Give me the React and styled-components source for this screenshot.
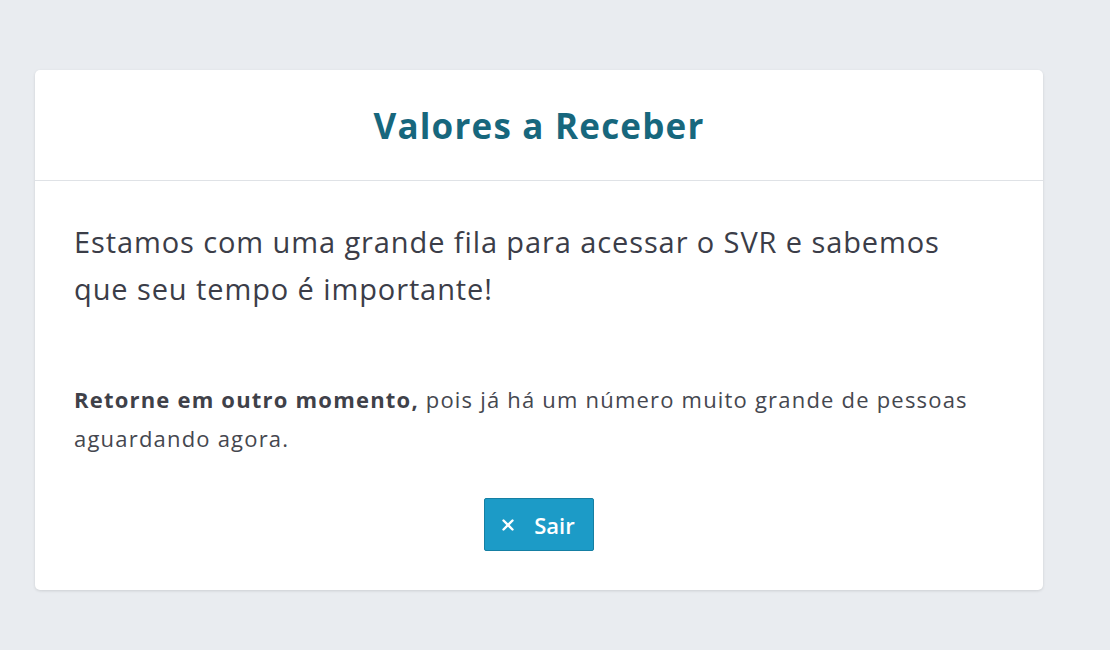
import styled, { createGlobalStyle } from 'styled-components';
import { X } from 'lucide-react';

const GlobalStyle = createGlobalStyle`
  html, body {
    margin: 0;
    padding: 0;
    background: #e9ecf0;
    font-family: 'Open Sans', 'Noto Sans', sans-serif;
  }
`;

const Page = styled.div`
  width: 1110px;
  height: 650px;
  padding: 70px 67px 0 35px;
  box-sizing: border-box;
`;

const Card = styled.div`
  background: #fff;
  border-radius: 5px;
  box-shadow: 0 1px 3px rgba(0, 0, 0, 0.12);
  height: 520px;
  display: flex;
  flex-direction: column;
`;

const Header = styled.div`
  height: 110px;
  border-bottom: 1px solid #dfe2e6;
  display: flex;
  align-items: center;
  justify-content: center;
`;

const Title = styled.h1`
  margin: 0;
  font-size: 35px;
  font-weight: 700;
  color: #17677d;
  letter-spacing: 1.2px;
`;

const Body = styled.div`
  padding: 37px 39px 0 39px;
  display: flex;
  flex-direction: column;
`;

const Lead = styled.p`
  margin: 0;
  font-size: 29px;
  line-height: 47px;
  letter-spacing: 0.9px;
  color: #3b3d48;
`;

const Note = styled.p`
  margin: 68px 0 0 0;
  font-size: 22px;
  line-height: 39px;
  letter-spacing: 1.2px;
  color: #45474f;
  b {
    font-weight: 700;
    color: #3f4149;
  }
`;

const Actions = styled.div`
  display: flex;
  justify-content: center;
  margin-top: 40px;
`;

const Button = styled.button`
  display: flex;
  align-items: center;
  gap: 17px;
  height: 53px;
  padding: 0 18px 0 14px;
  border: 1px solid #157fa3;
  border-radius: 2px;
  background: #1c9bc7;
  color: #fff;
  font-family: inherit;
  font-size: 22px;
  font-weight: 600;
  cursor: pointer;
`;

export default function App() {
  return (
    <>
      <GlobalStyle />
      <Page>
        <Card>
          <Header>
            <Title>Valores a Receber</Title>
          </Header>
          <Body>
            <Lead>
              Estamos com uma grande fila para acessar o SVR e sabemos
              <br />
              que seu tempo é importante!
            </Lead>
            <Note>
              <b>Retorne em outro momento,</b> pois já há um número muito grande de pessoas aguardando agora.
            </Note>
            <Actions>
              <Button>
                <X size={18} strokeWidth={3.2} />
                Sair
              </Button>
            </Actions>
          </Body>
        </Card>
      </Page>
    </>
  );
}
